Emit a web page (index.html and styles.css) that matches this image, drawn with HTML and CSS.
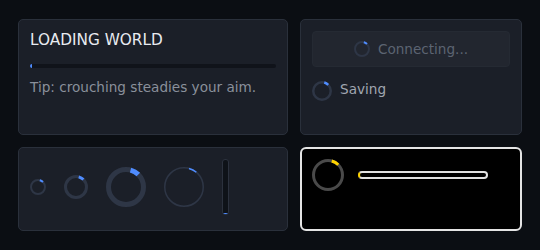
FILE: index.html
```html
<!DOCTYPE html>
<html>
<head>
<meta charset="utf-8">
<link rel="stylesheet" href="styles.css">
</head>
<body>
<div class="grid">
  <section class="card loading">
    <h1 class="title">LOADING WORLD</h1>
    <div class="track"><div class="fill" style="width:2px"></div></div>
    <p class="tip">Tip: crouching steadies your aim.</p>
  </section>

  <section class="card status">
    <button class="btn" disabled>
      <svg class="spin" width="16" height="16" viewBox="0 0 16 16">
        <circle cx="8" cy="8" r="7" class="ring" stroke-width="2"/>
        <circle cx="8" cy="8" r="7" class="arc" stroke-width="2" pathLength="360" stroke-dasharray="30 330" transform="rotate(-75 8 8)"/>
      </svg>
      <span>Connecting...</span>
    </button>
    <div class="saving">
      <svg class="spin" width="20" height="20" viewBox="0 0 20 20">
        <circle cx="10" cy="10" r="8.75" class="ring" stroke-width="2.5"/>
        <circle cx="10" cy="10" r="8.75" class="arc" stroke-width="2.5" pathLength="360" stroke-dasharray="30 330" transform="rotate(-75 10 10)"/>
      </svg>
      <span class="saving-label">Saving</span>
    </div>
  </section>

  <section class="card sizes">
    <svg width="16" height="16" viewBox="0 0 16 16">
      <circle cx="8" cy="8" r="7" class="ring" stroke-width="2"/>
      <circle cx="8" cy="8" r="7" class="arc" stroke-width="2" pathLength="360" stroke-dasharray="30 330" transform="rotate(-75 8 8)"/>
    </svg>
    <svg width="24" height="24" viewBox="0 0 24 24">
      <circle cx="12" cy="12" r="10.5" class="ring" stroke-width="3"/>
      <circle cx="12" cy="12" r="10.5" class="arc" stroke-width="3" pathLength="360" stroke-dasharray="30 330" transform="rotate(-75 12 12)"/>
    </svg>
    <svg width="40" height="40" viewBox="0 0 40 40">
      <circle cx="20" cy="20" r="17.5" class="ring" stroke-width="5"/>
      <circle cx="20" cy="20" r="17.5" class="arc" stroke-width="5" pathLength="360" stroke-dasharray="30 330" transform="rotate(-75 20 20)"/>
    </svg>
    <svg width="40" height="40" viewBox="0 0 40 40">
      <circle cx="20" cy="20" r="19.25" class="ring" stroke-width="1.5"/>
      <circle cx="20" cy="20" r="19.25" class="arc" stroke-width="1.5" pathLength="360" stroke-dasharray="25 335" transform="rotate(-75 20 20)"/>
    </svg>
    <div class="vtrack"><div class="vfill" style="height:1px"></div></div>
  </section>

  <section class="card contrast">
    <svg width="32" height="32" viewBox="0 0 32 32">
      <circle cx="16" cy="16" r="14.5" class="hc-ring" stroke-width="3"/>
      <circle cx="16" cy="16" r="14.5" class="hc-arc" stroke-width="3" pathLength="360" stroke-dasharray="30 330" transform="rotate(-75 16 16)"/>
    </svg>
    <div class="hc-track"></div>
  </section>
</div>
</body>
</html>
```

FILE: styles.css
```css
* { box-sizing: border-box; }

html, body {
  margin: 0;
  background: #0b0e13;
  font-family: "DejaVu Sans", sans-serif;
}

.grid {
  display: grid;
  grid-template-columns: 270px 222px;
  grid-template-rows: 116px 84px;
  gap: 12px;
  padding: 19px 18px;
}

.card {
  background: #1b1f28;
  border: 1px solid #2a303b;
  border-radius: 5px;
  padding: 11px;
}

.title {
  margin: 0 0 15px;
  font-size: 15.3px;
  font-weight: normal;
  color: #e8ebf0;
  line-height: 18px;
}

.track {
  height: 4px;
  background: #10131a;
  border-radius: 2px;
  overflow: hidden;
}

.fill {
  height: 100%;
  background: #4f8cff;
}

.tip {
  margin: 11px 0 0;
  font-size: 13.6px;
  color: #8a909b;
  line-height: 16px;
}

.ring { fill: none; stroke: #2e3646; }
.arc { fill: none; stroke: #4f8cff; }

.btn {
  display: flex;
  align-items: center;
  justify-content: center;
  gap: 8px;
  width: 100%;
  height: 36px;
  background: #22262f;
  border: 1px solid #252a33;
  border-radius: 4px;
  font-family: "DejaVu Sans", sans-serif;
  font-size: 13.6px;
  color: #5c6472;
  padding: 0;
}

.saving {
  display: flex;
  align-items: flex-start;
  gap: 8px;
  margin-top: 14px;
  font-size: 13.6px;
  color: #a0a6b0;
}

.saving-label { line-height: 16px; }

.spin { display: block; flex: none; }

.sizes {
  display: flex;
  align-items: center;
  gap: 18px;
  padding: 11px 11px 15px;
}

.sizes svg { display: block; flex: none; }

.vtrack {
  width: 7px;
  height: 56px;
  background: #0e1218;
  border: 1px solid #2b313d;
  border-radius: 3px;
  display: flex;
  flex-direction: column;
  justify-content: flex-end;
  overflow: hidden;
}

.vfill { background: #4f8cff; }

.contrast {
  background: #000;
  border: 2px solid #e4e4e4;
  border-radius: 6px;
  padding: 10px;
  display: flex;
  align-items: flex-start;
  gap: 14px;
}

.contrast svg { display: block; flex: none; }

.hc-ring { fill: none; stroke: #4a4a4a; }
.hc-arc { fill: none; stroke: #ffd400; }

.hc-track {
  width: 130px;
  height: 8px;
  margin-top: 12px;
  background: #000;
  border: 2px solid #e2e2e2;
  border-left-color: #ffd400;
  border-radius: 4px;
}
```
